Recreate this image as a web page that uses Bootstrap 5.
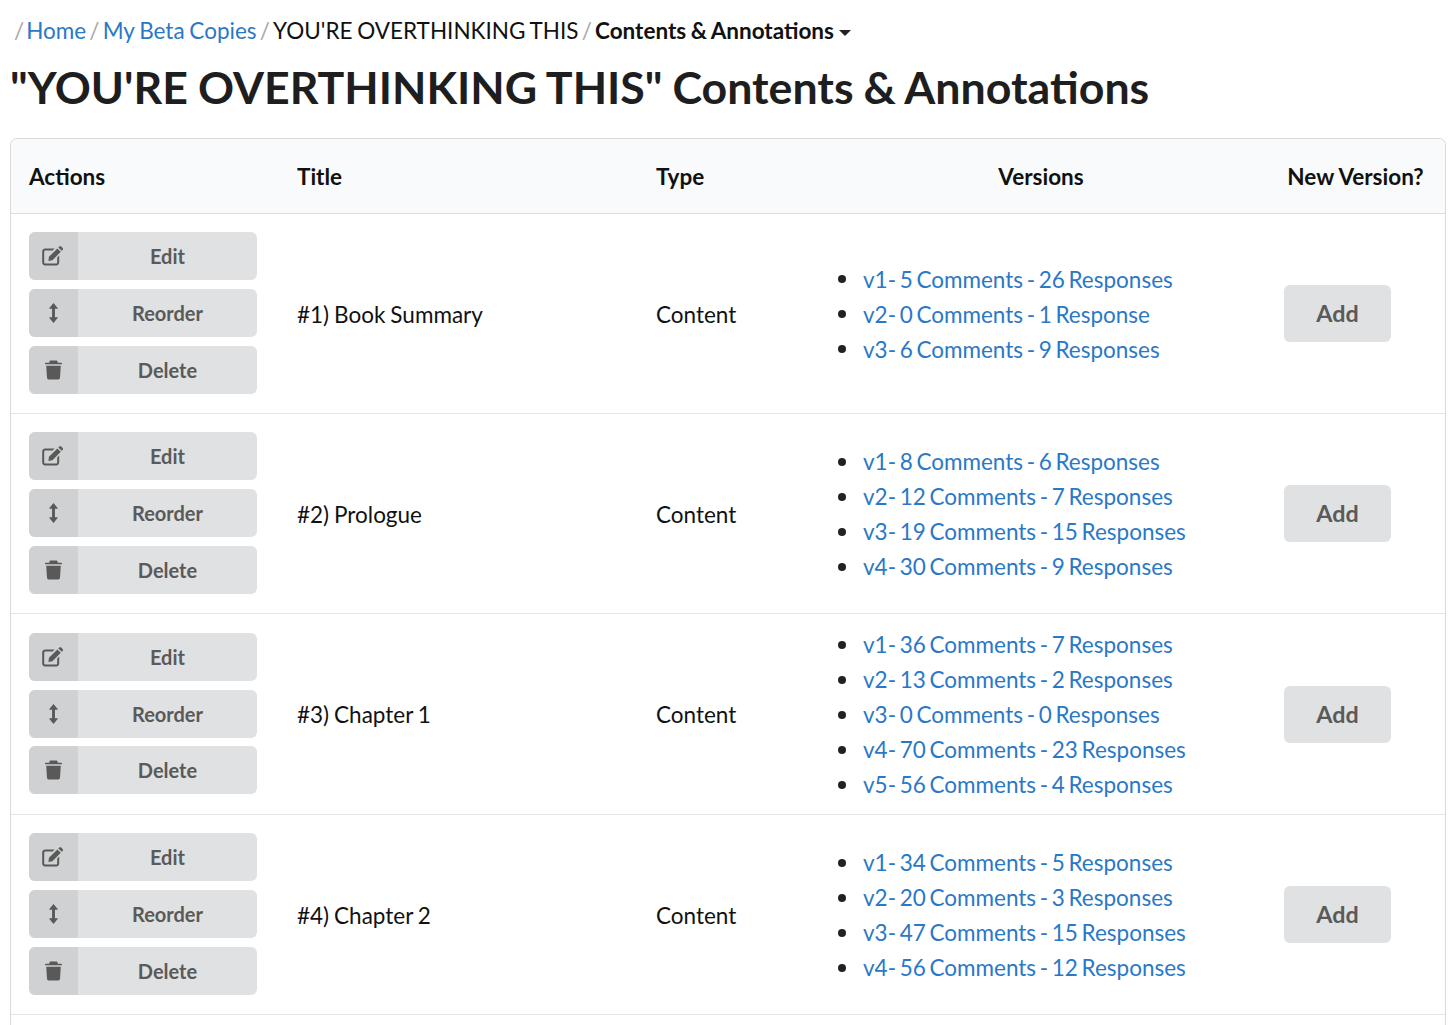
<!DOCTYPE html>
<html lang="en">
<head>
<meta charset="utf-8">
<title>Contents &amp; Annotations</title>
<link href="https://cdn.jsdelivr.net/npm/bootstrap@5.3.0/dist/css/bootstrap.min.css" rel="stylesheet">
<style>
html,body{height:1025px;overflow:hidden}
body{font-family:Lato,"Liberation Sans",sans-serif;font-size:22.5px;line-height:35px;word-spacing:-.8px;color:#111;background:#fff;padding:0 10px}
.crumbs{margin:0;padding:13px 0 0 4px;height:49px;font-size:22.5px;line-height:35px;word-spacing:-1px;white-space:nowrap}
.crumbs a{color:#2a78c6;text-decoration:none}
.crumbs .sep{color:#a9a9a9;margin:0 3.2px}
.crumbs .sep:first-child{margin-left:0;margin-right:2px}
.crumbs b{font-weight:700}
.caret-down{display:inline-block;width:0;height:0;border:6px solid transparent;border-top:6.5px solid #222;border-bottom:0;margin-left:5px;vertical-align:3px}
.heading{font-size:44.7px;line-height:56px;font-weight:700;word-spacing:-.9px;color:#1e1e1e;margin:10px 0 23px;white-space:nowrap}
.sheet{border:1.5px solid #d9dadb;border-bottom:0;border-radius:7px 7px 0 0;flex:1 1 auto;overflow:hidden}
.grid-table{table-layout:fixed;width:100%;margin:0;--bs-table-bg:transparent;color:#111;border-collapse:separate;border-spacing:0}
.grid-table th{background:#f9fafb;height:75px;padding:0 18px;font-weight:700;word-spacing:0;vertical-align:middle;border-bottom:1.5px solid #dcdddd;color:#111}
.grid-table td{padding:19.5px 18px 17.5px;vertical-align:middle;border-bottom:1.5px solid #e4e5e5;color:#111}
.grid-table td.acts{padding:18.4px 18px 18.8px}
.grid-table td.adds{padding:19px 18px 18px}
.grid-table td.vers{padding-top:13.7px;padding-bottom:11.7px}
.c-act{width:268px}.c-title{width:359px}.c-type{width:178px}.c-ver{width:450px}
.act-stack{width:228px;gap:8.8px}
.act-btn{display:flex;align-items:stretch;height:48px;padding:0;border:0;border-radius:6px;background:#e0e1e2;color:#5a5a5a;font-size:20px;font-weight:700;line-height:48px;word-spacing:0;overflow:hidden}
.act-btn:hover,.act-btn:active{background:#e0e1e2!important;color:#5a5a5a!important}
.act-ico{flex:0 0 49px;padding-right:1px;background:#d0d1d2;display:flex;align-items:center;justify-content:center}
.act-ico svg{fill:#595959;display:block}
.act-lbl{flex:1 1 auto;text-align:center}
.add-btn{width:107px;height:57px;padding:0;border:0;border-radius:6px;background:#e0e1e2;color:#5a5a5a;font-size:23.33px;font-weight:700}
.add-btn:hover{background:#e0e1e2;color:#5a5a5a}
.ver-list{margin:0;padding-left:4px;list-style:none;word-spacing:-2.1px}
.ver-list li{height:35px;display:flex;align-items:center}
.ver-list li::before{content:"";flex:0 0 8px;height:8px;border-radius:50%;background:#222;margin-right:17px}
.ver-list a{color:#2a78c6;text-decoration:none}
</style>
</head>
<body class="d-flex flex-column">
<svg width="0" height="0" class="position-absolute">
  <symbol id="i-edit" viewBox="0 0 22 20">
    <path d="M3.2 2.6H12.6L10.6 4.6H3.4C2.8 4.6 2.2 5.1 2.2 5.8V16.4C2.2 17 2.8 17.6 3.4 17.6H14C14.7 17.6 15.2 17 15.2 16.4V11.4L17.2 9.4V16.6C17.2 18.3 15.8 19.6 14.2 19.6H3.2C1.5 19.6 0.2 18.3 0.2 16.6V5.6C0.2 3.9 1.5 2.6 3.2 2.6Z"/>
    <path d="M7 10.8 15.4 2.4 18.8 5.8 10.4 14.2 6.4 15Z"/>
    <path d="M16.4 1.4 17.2.6C17.8 0 18.6 0 19.2.6L20.6 2C21.2 2.6 21.2 3.4 20.6 4L19.8 4.8Z"/>
  </symbol>
  <symbol id="i-move" viewBox="0 0 10 22">
    <path d="M5 0 9.6 5.4C9.9 5.8 9.7 6.3 9.2 6.3H6.6V15.7H9.2C9.7 15.7 9.9 16.2 9.6 16.6L5 22 .4 16.6C.1 16.2.3 15.7.8 15.7H3.4V6.3H.8C.3 6.3.1 5.8.4 5.4Z"/>
  </symbol>
  <symbol id="i-trash" viewBox="0 0 18 20">
    <path d="M6 0H12C12.7 0 13.2.5 13.3 1.2L13.5 2.2H17.2C17.6 2.2 18 2.6 18 3V4H0V3C0 2.6.4 2.2.8 2.2H4.5L4.7 1.2C4.8.5 5.3 0 6 0Z"/>
    <path d="M1.3 5.4H16.7L15.9 18.2C15.8 19.2 15 20 14 20H4C3 20 2.2 19.2 2.1 18.2Z"/>
  </symbol>
</svg>

<nav class="crumbs" aria-label="breadcrumb"><span class="sep">/</span><a href="#">Home</a><span class="sep">/</span><a href="#">My Beta Copies</a><span class="sep">/</span>YOU'RE OVERTHINKING THIS<span class="sep">/</span><b>Contents &amp; Annotations</b><span class="caret-down"></span></nav>
<h1 class="heading">"YOU'RE OVERTHINKING THIS" Contents &amp; Annotations</h1>

<div class="sheet">
<table class="table grid-table">
  <colgroup><col class="c-act"><col class="c-title"><col class="c-type"><col class="c-ver"><col></colgroup>
  <thead>
    <tr><th>Actions</th><th>Title</th><th>Type</th><th class="text-center">Versions</th><th class="text-center">New Version?</th></tr>
  </thead>
  <tbody>
    <tr>
      <td class="acts"><div class="d-flex flex-column act-stack">
        <button class="btn act-btn"><span class="act-ico"><svg width="22" height="20"><use href="#i-edit"/></svg></span><span class="act-lbl">Edit</span></button>
        <button class="btn act-btn"><span class="act-ico"><svg width="9" height="20"><use href="#i-move"/></svg></span><span class="act-lbl">Reorder</span></button>
        <button class="btn act-btn"><span class="act-ico"><svg width="17" height="20"><use href="#i-trash"/></svg></span><span class="act-lbl">Delete</span></button>
      </div></td>
      <td>#1) Book Summary</td>
      <td>Content</td>
      <td class="vers"><ul class="ver-list">
        <li><a href="#">v1- 5 Comments - 26 Responses</a></li>
        <li><a href="#">v2- 0 Comments - 1 Response</a></li>
        <li><a href="#">v3- 6 Comments - 9 Responses</a></li>
      </ul></td>
      <td class="adds"><button class="btn add-btn">Add</button></td>
    </tr>
    <tr>
      <td class="acts"><div class="d-flex flex-column act-stack">
        <button class="btn act-btn"><span class="act-ico"><svg width="22" height="20"><use href="#i-edit"/></svg></span><span class="act-lbl">Edit</span></button>
        <button class="btn act-btn"><span class="act-ico"><svg width="9" height="20"><use href="#i-move"/></svg></span><span class="act-lbl">Reorder</span></button>
        <button class="btn act-btn"><span class="act-ico"><svg width="17" height="20"><use href="#i-trash"/></svg></span><span class="act-lbl">Delete</span></button>
      </div></td>
      <td>#2) Prologue</td>
      <td>Content</td>
      <td class="vers"><ul class="ver-list">
        <li><a href="#">v1- 8 Comments - 6 Responses</a></li>
        <li><a href="#">v2- 12 Comments - 7 Responses</a></li>
        <li><a href="#">v3- 19 Comments - 15 Responses</a></li>
        <li><a href="#">v4- 30 Comments - 9 Responses</a></li>
      </ul></td>
      <td class="adds"><button class="btn add-btn">Add</button></td>
    </tr>
    <tr>
      <td class="acts"><div class="d-flex flex-column act-stack">
        <button class="btn act-btn"><span class="act-ico"><svg width="22" height="20"><use href="#i-edit"/></svg></span><span class="act-lbl">Edit</span></button>
        <button class="btn act-btn"><span class="act-ico"><svg width="9" height="20"><use href="#i-move"/></svg></span><span class="act-lbl">Reorder</span></button>
        <button class="btn act-btn"><span class="act-ico"><svg width="17" height="20"><use href="#i-trash"/></svg></span><span class="act-lbl">Delete</span></button>
      </div></td>
      <td>#3) Chapter 1</td>
      <td>Content</td>
      <td class="vers"><ul class="ver-list">
        <li><a href="#">v1- 36 Comments - 7 Responses</a></li>
        <li><a href="#">v2- 13 Comments - 2 Responses</a></li>
        <li><a href="#">v3- 0 Comments - 0 Responses</a></li>
        <li><a href="#">v4- 70 Comments - 23 Responses</a></li>
        <li><a href="#">v5- 56 Comments - 4 Responses</a></li>
      </ul></td>
      <td class="adds"><button class="btn add-btn">Add</button></td>
    </tr>
    <tr>
      <td class="acts"><div class="d-flex flex-column act-stack">
        <button class="btn act-btn"><span class="act-ico"><svg width="22" height="20"><use href="#i-edit"/></svg></span><span class="act-lbl">Edit</span></button>
        <button class="btn act-btn"><span class="act-ico"><svg width="9" height="20"><use href="#i-move"/></svg></span><span class="act-lbl">Reorder</span></button>
        <button class="btn act-btn"><span class="act-ico"><svg width="17" height="20"><use href="#i-trash"/></svg></span><span class="act-lbl">Delete</span></button>
      </div></td>
      <td>#4) Chapter 2</td>
      <td>Content</td>
      <td class="vers"><ul class="ver-list">
        <li><a href="#">v1- 34 Comments - 5 Responses</a></li>
        <li><a href="#">v2- 20 Comments - 3 Responses</a></li>
        <li><a href="#">v3- 47 Comments - 15 Responses</a></li>
        <li><a href="#">v4- 56 Comments - 12 Responses</a></li>
      </ul></td>
      <td class="adds"><button class="btn add-btn">Add</button></td>
    </tr>
  </tbody>
</table>
</div>
<script src="https://cdn.jsdelivr.net/npm/bootstrap@5.3.0/dist/js/bootstrap.bundle.min.js"></script>
</body>
</html>
